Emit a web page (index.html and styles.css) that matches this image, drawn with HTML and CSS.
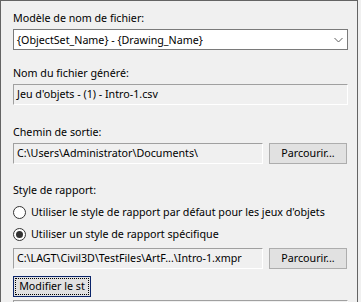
FILE: index.html
```html
<!DOCTYPE html>
<html>
<head>
<meta charset="utf-8">
<link rel="stylesheet" href="styles.css">
</head>
<body>
<div class="panel">
  <div class="label l1">Modèle de nom de fichier:</div>
  <div class="combo">
    <span class="combo-text">{ObjectSet_Name} - {Drawing_Name}</span>
    <svg class="chev" width="9" height="6" viewBox="0 0 9 6"><path d="M0.5 1 L4.5 5 L8.5 1" fill="none" stroke="#606060" stroke-width="1"/></svg>
  </div>
  <div class="label l2">Nom du fichier généré:</div>
  <div class="field full">Jeu d'objets - (1) - Intro-1.csv</div>
  <div class="label l3">Chemin de sortie:</div>
  <div class="row">
    <div class="field">C:\Users\Administrator\Documents\</div>
    <div class="btn">Parcourir...</div>
  </div>
  <div class="label l4">Style de rapport:</div>
  <div class="radio r1"><span class="circle"></span><span>Utiliser le style de rapport par défaut pour les jeux d'objets</span></div>
  <div class="radio r2"><span class="circle checked"></span><span>Utiliser un style de rapport spécifique</span></div>
  <div class="row r3">
    <div class="field">C:\LAGT\Civil3D\TestFiles\ArtF...\Intro-1.xmpr</div>
    <div class="btn">Parcourir...</div>
  </div>
  <div class="btn focus"><span class="focus-rect">Modifier le st</span></div>
  <div class="field full last"></div>
</div>
</body>
</html>
```

FILE: styles.css
```css
html, body {
  margin: 0;
  padding: 0;
  background: #f0f0f0;
  overflow: hidden;
}
body {
  width: 361px;
  height: 302px;
  font-family: "Noto Sans", sans-serif;
  font-size: 10.7px;
  color: #000;
}
.panel {
  box-sizing: border-box;
  width: 358px;
  height: 302px;
  overflow: hidden;
  border-left: 1px solid #646464;
  border-top: 1px solid #646464;
  border-right: 1px solid #646464;
  padding: 0 9px 0 12px;
  display: flex;
  flex-direction: column;
}
.panel > * { flex: none; }
.label {
  height: 16px;
  line-height: 16px;
  white-space: nowrap;
}
.l1 { margin-top: 9px; margin-bottom: 3px; }
.l2 { margin-top: 15px; margin-bottom: 3px; }
.l3 { margin-top: 19px; margin-bottom: 3px; }
.l4 { margin-top: 18px; }
.combo {
  box-sizing: border-box;
  width: 335px;
  height: 21px;
  border: 1px solid #7a7a7a;
  background: #fff;
  display: flex;
  align-items: center;
  padding-left: 3px;
  padding-right: 4px;
}
.combo-text { flex: 1; white-space: nowrap; }
.chev { display: block; }
.field {
  box-sizing: border-box;
  height: 21px;
  border-top: 1px solid #a0a0a0;
  border-left: 1px solid #a0a0a0;
  border-right: 1px solid #fff;
  border-bottom: 1px solid #fff;
  background: #f0f0f0;
  padding-left: 3px;
  line-height: 19px;
  white-space: nowrap;
  overflow: hidden;
}
.full { width: 335px; }
.row {
  display: flex;
  gap: 6px;
  width: 335px;
}
.row .field { width: 250px; }
.btn {
  box-sizing: border-box;
  width: 78px;
  height: 21px;
  border: 1px solid #adadad;
  background: #e1e1e1;
  text-align: center;
  line-height: 19px;
  white-space: nowrap;
}
.radio {
  display: flex;
  align-items: center;
  height: 16px;
  gap: 5px;
  white-space: nowrap;
  margin-top: 6px;
}
.circle {
  box-sizing: border-box;
  width: 13px;
  height: 13px;
  border: 1px solid #333;
  border-radius: 50%;
  background: #fff;
  display: flex;
  align-items: center;
  justify-content: center;
  flex: none;
}
.circle.checked::after {
  content: "";
  width: 7px;
  height: 7px;
  border-radius: 50%;
  background: #333;
}
.r3 { margin-top: 6px; }
.focus {
  margin-top: 7px;
  border: 1px solid #0a246a;
  padding: 1px;
  line-height: 17px;
  overflow: hidden;
}
.focus-rect {
  display: block;
  height: 17px;
  outline: 1px dotted #000;
  outline-offset: -1px;
}
.last { margin-top: 3px; }
```
